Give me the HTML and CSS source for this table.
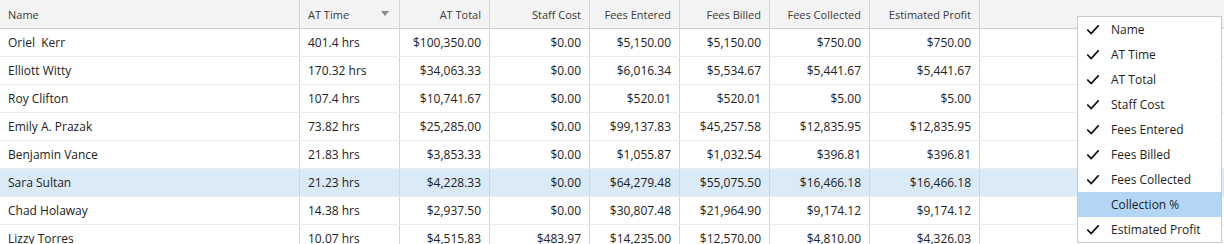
FILE: index.html
```html
<!DOCTYPE html>
<html>
<head>
<meta charset="utf-8">
<link rel="stylesheet" href="styles.css">
</head>
<body>
<div class="grid">
  <div class="row head">
    <div class="cell c-name">Name</div>
    <div class="cell c-time sorted">AT Time<span class="sort"></span></div>
    <div class="cell c-total r">AT Total</div>
    <div class="cell c-staff r">Staff Cost</div>
    <div class="cell c-entered r">Fees Entered</div>
    <div class="cell c-billed r">Fees Billed</div>
    <div class="cell c-coll r">Fees Collected</div>
    <div class="cell c-profit r">Estimated Profit</div>
    <div class="fill"></div>
  </div>
  <div class="row">
    <div class="cell c-name pre">Oriel  Kerr</div>
    <div class="cell c-time">401.4 hrs</div>
    <div class="cell c-total r">$100,350.00</div>
    <div class="cell c-staff r">$0.00</div>
    <div class="cell c-entered r">$5,150.00</div>
    <div class="cell c-billed r">$5,150.00</div>
    <div class="cell c-coll r">$750.00</div>
    <div class="cell c-profit r">$750.00</div>
    <div class="fill"></div>
  </div>
  <div class="row">
    <div class="cell c-name">Elliott Witty</div>
    <div class="cell c-time">170.32 hrs</div>
    <div class="cell c-total r">$34,063.33</div>
    <div class="cell c-staff r">$0.00</div>
    <div class="cell c-entered r">$6,016.34</div>
    <div class="cell c-billed r">$5,534.67</div>
    <div class="cell c-coll r">$5,441.67</div>
    <div class="cell c-profit r">$5,441.67</div>
    <div class="fill"></div>
  </div>
  <div class="row">
    <div class="cell c-name">Roy Clifton</div>
    <div class="cell c-time">107.4 hrs</div>
    <div class="cell c-total r">$10,741.67</div>
    <div class="cell c-staff r">$0.00</div>
    <div class="cell c-entered r">$520.01</div>
    <div class="cell c-billed r">$520.01</div>
    <div class="cell c-coll r">$5.00</div>
    <div class="cell c-profit r">$5.00</div>
    <div class="fill"></div>
  </div>
  <div class="row">
    <div class="cell c-name">Emily A. Prazak</div>
    <div class="cell c-time">73.82 hrs</div>
    <div class="cell c-total r">$25,285.00</div>
    <div class="cell c-staff r">$0.00</div>
    <div class="cell c-entered r">$99,137.83</div>
    <div class="cell c-billed r">$45,257.58</div>
    <div class="cell c-coll r">$12,835.95</div>
    <div class="cell c-profit r">$12,835.95</div>
    <div class="fill"></div>
  </div>
  <div class="row">
    <div class="cell c-name">Benjamin Vance</div>
    <div class="cell c-time">21.83 hrs</div>
    <div class="cell c-total r">$3,853.33</div>
    <div class="cell c-staff r">$0.00</div>
    <div class="cell c-entered r">$1,055.87</div>
    <div class="cell c-billed r">$1,032.54</div>
    <div class="cell c-coll r">$396.81</div>
    <div class="cell c-profit r">$396.81</div>
    <div class="fill"></div>
  </div>
  <div class="row selected">
    <div class="cell c-name">Sara Sultan</div>
    <div class="cell c-time">21.23 hrs</div>
    <div class="cell c-total r">$4,228.33</div>
    <div class="cell c-staff r">$0.00</div>
    <div class="cell c-entered r">$64,279.48</div>
    <div class="cell c-billed r">$55,075.50</div>
    <div class="cell c-coll r">$16,466.18</div>
    <div class="cell c-profit r">$16,466.18</div>
    <div class="fill"></div>
  </div>
  <div class="row">
    <div class="cell c-name">Chad Holaway</div>
    <div class="cell c-time">14.38 hrs</div>
    <div class="cell c-total r">$2,937.50</div>
    <div class="cell c-staff r">$0.00</div>
    <div class="cell c-entered r">$30,807.48</div>
    <div class="cell c-billed r">$21,964.90</div>
    <div class="cell c-coll r">$9,174.12</div>
    <div class="cell c-profit r">$9,174.12</div>
    <div class="fill"></div>
  </div>
  <div class="row">
    <div class="cell c-name">Lizzy Torres</div>
    <div class="cell c-time">10.07 hrs</div>
    <div class="cell c-total r">$4,515.83</div>
    <div class="cell c-staff r">$483.97</div>
    <div class="cell c-entered r">$14,235.00</div>
    <div class="cell c-billed r">$12,570.00</div>
    <div class="cell c-coll r">$4,810.00</div>
    <div class="cell c-profit r">$4,326.03</div>
    <div class="fill"></div>
  </div>

  <ul class="menu">
    <li class="item"><svg class="check" viewBox="0 0 12 10"><polyline points="0.8,5.2 4.2,8.6 11.2,0.8"/></svg><span>Name</span></li>
    <li class="item"><svg class="check" viewBox="0 0 12 10"><polyline points="0.8,5.2 4.2,8.6 11.2,0.8"/></svg><span>AT Time</span></li>
    <li class="item"><svg class="check" viewBox="0 0 12 10"><polyline points="0.8,5.2 4.2,8.6 11.2,0.8"/></svg><span>AT Total</span></li>
    <li class="item"><svg class="check" viewBox="0 0 12 10"><polyline points="0.8,5.2 4.2,8.6 11.2,0.8"/></svg><span>Staff Cost</span></li>
    <li class="item"><svg class="check" viewBox="0 0 12 10"><polyline points="0.8,5.2 4.2,8.6 11.2,0.8"/></svg><span>Fees Entered</span></li>
    <li class="item"><svg class="check" viewBox="0 0 12 10"><polyline points="0.8,5.2 4.2,8.6 11.2,0.8"/></svg><span>Fees Billed</span></li>
    <li class="item"><svg class="check" viewBox="0 0 12 10"><polyline points="0.8,5.2 4.2,8.6 11.2,0.8"/></svg><span>Fees Collected</span></li>
    <li class="item hover"><span class="nocheck"></span><span>Collection %</span></li>
    <li class="item"><svg class="check" viewBox="0 0 12 10"><polyline points="0.8,5.2 4.2,8.6 11.2,0.8"/></svg><span>Estimated Profit</span></li>
  </ul>
</div>
</body>
</html>
```

FILE: styles.css
```css
html, body {
  margin: 0;
  padding: 0;
  background: #ffffff;
}

.grid {
  position: relative;
  width: 1224px;
  height: 244px;
  overflow: hidden;
  font-family: "Open Sans", "Noto Sans", sans-serif;
  font-size: 12px;
  color: #222222;
}

.row {
  display: flex;
  height: 28px;
  box-sizing: border-box;
  border-bottom: 1px solid #ececec;
}

.row.head {
  background: #f3f3f3;
  border-bottom: 1px solid #cfcfcf;
  font-size: 11px;
  color: #3a3a3a;
  height: 29px;
}

.row.selected {
  background: #daeaf7;
}

.cell {
  flex: none;
  box-sizing: border-box;
  display: flex;
  align-items: center;
  padding: 0 8px;
  border-right: 1px solid #d4d4d4;
  white-space: nowrap;
  overflow: hidden;
}

.cell.r {
  justify-content: flex-end;
}

.cell.pre {
  white-space: pre;
}

.fill {
  flex: 1;
}

.c-name { width: 300px; }
.c-time { width: 100px; }
.c-total { width: 90px; }
.c-staff { width: 100px; }
.c-entered { width: 90px; }
.c-billed { width: 90px; }
.c-coll { width: 100px; }
.c-profit { width: 110px; }

.sorted {
  justify-content: space-between;
}

.sort {
  width: 0;
  height: 0;
  border-left: 4px solid transparent;
  border-right: 4px solid transparent;
  border-top: 5px solid #8a8a8a;
  margin-right: 2px;
  margin-top: -1px;
}

.menu {
  position: absolute;
  left: 1077px;
  top: 16px;
  width: 145px;
  margin: 0;
  padding: 0;
  list-style: none;
  background: #ffffff;
  border: 1px solid #c9c9c9;
  box-sizing: border-box;
  font-size: 12px;
  color: #1e1e1e;
}

.item {
  display: flex;
  align-items: center;
  height: 25px;
  padding-left: 9px;
}

.item.hover {
  background: #b4d6f5;
}

.check {
  width: 12px;
  height: 10px;
  margin-right: 12px;
  flex: none;
}

.check polyline {
  fill: none;
  stroke: #111111;
  stroke-width: 1.7;
  stroke-linecap: square;
  stroke-linejoin: miter;
}

.nocheck {
  width: 12px;
  margin-right: 12px;
  flex: none;
}
```
